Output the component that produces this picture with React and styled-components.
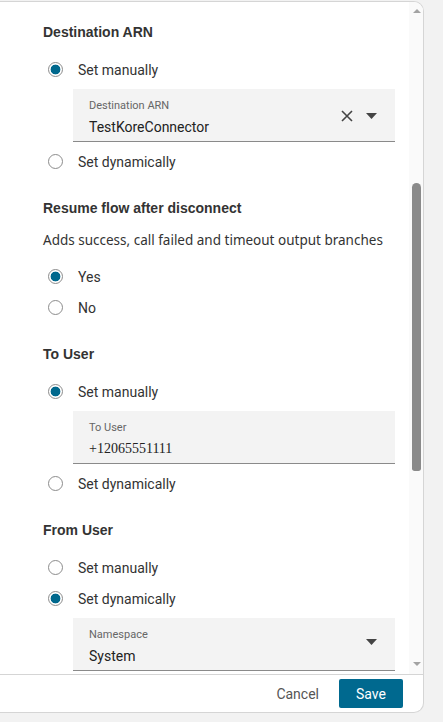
import React from 'react'
import styled, { createGlobalStyle } from 'styled-components'

const GlobalStyle = createGlobalStyle`
    html, body {
        margin: 0;
        padding: 0;
        background: #f2f2f2;
        font-family: Roboto, "Liberation Sans", Arial, sans-serif;
    }
`;

const sections = [
    {
        id: 'arn',
        title: 'Destination ARN',
        options: [
            { label: 'Set manually', checked: true, field: { label: 'Destination ARN', value: 'TestKoreConnector', clearable: true, select: true } },
            { label: 'Set dynamically' },
        ],
    },
    {
        id: 'resume',
        title: 'Resume flow after disconnect',
        description: 'Adds success, call failed and timeout output branches',
        options: [
            { label: 'Yes', checked: true },
            { label: 'No' },
        ],
    },
    {
        id: 'to',
        title: 'To User',
        options: [
            { label: 'Set manually', checked: true, field: { label: 'To User', value: '+12065551111', plain: true } },
            { label: 'Set dynamically' },
        ],
    },
    {
        id: 'from',
        title: 'From User',
        options: [
            { label: 'Set manually' },
            { label: 'Set dynamically', checked: true, field: { label: 'Namespace', value: 'System', select: true } },
        ],
    },
];

function Caret() {
    return (
        <svg width="11" height="6" viewBox="0 0 11 6">
            <path d="M0 0 L11 0 L5.5 6 Z" fill="#444" />
        </svg>
    )
}

function Clear() {
    return (
        <svg width="12" height="12" viewBox="0 0 12 12">
            <path d="M1 1 L11 11 M11 1 L1 11" stroke="#444" strokeWidth="1.6" />
        </svg>
    )
}

function Field({ field }) {
    return (
        <FieldBox>
            <FieldText>
                <FieldLabel>{field.label}</FieldLabel>
                <FieldValue $plain={field.plain}>{field.value}</FieldValue>
            </FieldText>
            <FieldIcons>
                {field.clearable && <Clear />}
                {field.select && <Caret />}
            </FieldIcons>
        </FieldBox>
    )
}

function App() {
    return (
        <>
            <GlobalStyle />
            <Panel>
                <Body>
                    <Scroll>
                        {sections.map((section) => (
                            <Section key={section.id}>
                                <Heading>{section.title}</Heading>
                                {section.description && <Description>{section.description}</Description>}
                                {section.options.map((opt) => (
                                    <React.Fragment key={opt.label}>
                                        <RadioRow>
                                            <Radio $checked={opt.checked} />
                                            <span>{opt.label}</span>
                                        </RadioRow>
                                        {opt.field && <Field field={opt.field} />}
                                    </React.Fragment>
                                ))}
                            </Section>
                        ))}
                    </Scroll>
                    <Track>
                        <Arrow $up />
                        <ThumbSlot>
                            <Thumb $top={170} $height={288} />
                        </ThumbSlot>
                        <Arrow />
                    </Track>
                </Body>
                <Footer>
                    <CancelButton>Cancel</CancelButton>
                    <SaveButton>Save</SaveButton>
                </Footer>
            </Panel>
        </>
    )
}

const Panel = styled.div`
    margin-top: 1px;
    width: 424px;
    height: 712px;
    background: #fff;
    border: 1px solid #d5d5d5;
    border-left: none;
    border-radius: 0 10px 10px 0;
    display: flex;
    flex-direction: column;
    overflow: hidden;
    box-sizing: border-box;
`;

const Body = styled.div`
    flex: 1;
    display: flex;
    min-height: 0;
`;

const Scroll = styled.div`
    flex: 1;
    overflow: hidden;
    padding: 20px 14px 0 43px;
    display: flex;
    flex-direction: column;
    gap: 21px;
`;

const Section = styled.section`
    display: flex;
    flex-direction: column;
`;

const Heading = styled.h3`
    margin: 0 0 12px;
    font-family: "Liberation Sans", Arial, sans-serif;
    font-size: 14px;
    line-height: 20px;
    font-weight: 700;
    color: #333;
`;

const Description = styled.p`
    margin: 0 0 11px;
    font-family: "Noto Sans", "Open Sans", sans-serif;
    font-size: 13.5px;
    line-height: 20px;
    color: #333;
`;

const RadioRow = styled.label`
    height: 31px;
    display: flex;
    align-items: center;
    gap: 15px;
    padding-left: 5px;
    font-size: 14px;
    color: #333;
`;

const Radio = styled.span`
    width: 15px;
    height: 15px;
    border-radius: 50%;
    box-sizing: border-box;
    border: 1px solid #8c8c8c;
    background: ${(p) => (p.$checked ? 'radial-gradient(circle, #00688d 0 4.6px, #fff 5.2px)' : '#fff')};
    flex-shrink: 0;
`;

const FieldBox = styled.div`
    margin: 4px 0 4px 30px;
    height: 53px;
    box-sizing: border-box;
    background: #f3f3f3;
    border-bottom: 1px solid #8a8a8a;
    padding: 10px 18px 0 16px;
    display: flex;
    align-items: flex-start;
    justify-content: space-between;
`;

const FieldText = styled.div`
    display: flex;
    flex-direction: column;
    gap: 4px;
`;

const FieldLabel = styled.div`
    font-size: 11px;
    line-height: 14px;
    color: #666;
`;

const FieldValue = styled.div`
    font-size: 14px;
    line-height: 20px;
    color: #222;
    font-family: ${(p) => (p.$plain ? '"Liberation Serif", "Times New Roman", serif' : 'Roboto, "Liberation Sans", sans-serif')};
`;

const FieldIcons = styled.div`
    margin-top: 11px;
    display: flex;
    align-items: center;
    gap: 13px;
`;

const Track = styled.div`
    width: 14px;
    background: #fafafa;
    display: flex;
    flex-direction: column;
    align-items: center;
    padding: 7px 0 8px;
`;

const Arrow = styled.span`
    width: 0;
    height: 0;
    margin-left: 1px;
    border-left: 4.5px solid transparent;
    border-right: 4.5px solid transparent;
    ${(p) => (p.$up ? 'border-bottom: 4px solid #a3a3a3;' : 'border-top: 4px solid #a3a3a3;')}
`;

const ThumbSlot = styled.div`
    flex: 1;
    width: 100%;
    display: flex;
    flex-direction: column;
    align-items: center;
`;

const Thumb = styled.div`
    margin-top: ${(p) => p.$top}px;
    height: ${(p) => p.$height}px;
    width: 9px;
    margin-left: 1px;
    background: #8a8a8a;
    border-radius: 5px 5px 3px 3px;
`;

const Footer = styled.div`
    height: 38px;
    box-sizing: border-box;
    flex-shrink: 0;
    border-top: 1px solid #d5d5d5;
    display: flex;
    align-items: flex-start;
    justify-content: flex-end;
    gap: 20px;
    padding: 4px 20px 0 0;
`;

const CancelButton = styled.button`
    border: none;
    background: none;
    padding: 0;
    height: 29px;
    font-family: Roboto, "Liberation Sans", sans-serif;
    font-size: 14px;
    color: #555;
`;

const SaveButton = styled.button`
    border: none;
    height: 29px;
    width: 64px;
    border-radius: 2px;
    background: #00698f;
    color: #fff;
    font-family: Roboto, "Liberation Sans", sans-serif;
    font-size: 14px;
`;

export default App
